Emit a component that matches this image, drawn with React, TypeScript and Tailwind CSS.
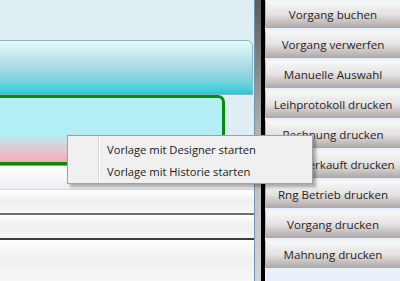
const buttons = [
  'Vorgang buchen',
  'Vorgang verwerfen',
  'Manuelle Auswahl',
  'Leihprotokoll drucken',
  'Rechnung drucken',
  'Nicht verkauft drucken',
  'Rng Betrieb drucken',
  'Vorgang drucken',
  'Mahnung drucken',
]

const font = { fontFamily: '"Open Sans", "Noto Sans", sans-serif' }

export default function App() {
  return (
    <div
      className="relative flex h-[281px] w-[400px] overflow-hidden bg-[#dfeef3] text-[11.6px] text-[#2a2222]"
      style={font}
    >
      {/* Left panel */}
      <div className="flex w-[254px] flex-col bg-[#dfeef3]">
        <div className="h-[40px]" />

        {/* Header bar */}
        <div className="ml-[-4px] h-[55px] w-[257px] rounded-tr-[6px] border border-[#86b9c0] bg-gradient-to-b from-[#e2fcfc] via-[#acd8e2] to-[#0ccdd6]" />

        {/* Green box */}
        <div className="ml-[-4px] h-[70px] w-[229px] rounded-tr-[7px] border-[3px] border-[#0a8a0a] bg-gradient-to-b from-[#b2eef6] via-[#b2eef6] via-55% to-[#f9a8b6]" />

        {/* Rows */}
        <div className="flex flex-1 flex-col border-t border-[#7ea3c8]">
          <div className="h-[24px] border-b border-[#d6d6d6] bg-gradient-to-b from-white to-[#eceef2]" />
          <div className="h-[25px] border-b-2 border-[#707070] bg-gradient-to-b from-white via-[#efefef] to-[#f8f8f8]" />
          <div className="h-[25px] border-b-2 border-[#3c3c3c] bg-gradient-to-b from-white via-[#efefef] to-[#f8f8f8]" />
          <div className="flex-1 bg-gradient-to-b from-white via-[#efefef] to-[#f8f8f8]" />
        </div>
      </div>

      {/* Splitter */}
      <div className="w-px bg-[#6f93b8]" />
      <div className="w-[6px] bg-gradient-to-b from-[#5c5c5c] via-[#b8b8b8] to-[#d4d4d4]" />
      <div className="w-[4px] bg-black" />

      {/* Right button column */}
      <div className="flex flex-1 flex-col gap-[3px] bg-[#e8f0fb] pt-px">
        {buttons.map((b) => (
          <div
            key={b}
            className="flex h-[27px] shrink-0 items-center justify-center whitespace-nowrap border-l border-[#bdb6b6] bg-gradient-to-b from-[#f8f8f8] via-[#e4e2e2] to-[#aea6a6]"
          >
            {b}
          </div>
        ))}
      </div>

      {/* Context menu */}
      <div className="absolute left-[67px] top-[135px] flex h-[49px] w-[246px] border border-[#a0a0a0] bg-[#f0f0f0] text-[11.2px] text-[#1a1a1a] shadow-[3px_3px_3px_rgba(0,0,0,0.3)]">
        <div className="w-[31px] border-r border-[#d8d8d8]" />
        <div className="w-px bg-white" />
        <div className="flex flex-1 flex-col pl-[7px] pt-[3px]">
          <div className="flex h-[23px] items-center">Vorlage mit Designer starten</div>
          <div className="flex h-[23px] items-center">Vorlage mit Historie starten</div>
        </div>
      </div>
    </div>
  )
}
